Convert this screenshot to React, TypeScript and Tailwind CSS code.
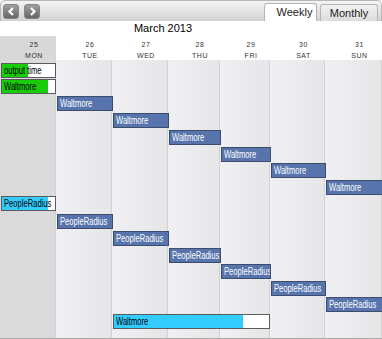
import React from "react";

const days = [
  { d: "25", n: "MON" },
  { d: "26", n: "TUE" },
  { d: "27", n: "WED" },
  { d: "28", n: "THU" },
  { d: "29", n: "FRI" },
  { d: "30", n: "SAT" },
  { d: "31", n: "SUN" },
];

const colStart = ["col-start-1", "col-start-2", "col-start-3", "col-start-4", "col-start-5", "col-start-6", "col-start-7"];
const rowStart = [
  "row-start-2", "row-start-3", "row-start-4", "row-start-5", "row-start-6", "row-start-7", "row-start-8", "row-start-9",
  "row-start-10", "row-start-11", "row-start-12", "row-start-13", "row-start-14", "row-start-15", "row-start-16", "row-start-17",
];

type Task = { row: number; col: number; span?: string; label: string; kind: "blue" | "green" | "cyan"; fill?: string };

const tasks: Task[] = [
  { row: 0, col: 0, label: "output time", kind: "green", fill: "w-[49%]" },
  { row: 1, col: 0, label: "Waltmore", kind: "green", fill: "w-[86%]" },
  { row: 2, col: 1, label: "Waltmore", kind: "blue" },
  { row: 3, col: 2, label: "Waltmore", kind: "blue" },
  { row: 4, col: 3, label: "Waltmore", kind: "blue" },
  { row: 5, col: 4, label: "Waltmore", kind: "blue" },
  { row: 6, col: 5, label: "Waltmore", kind: "blue" },
  { row: 7, col: 6, label: "Waltmore", kind: "blue" },
  { row: 8, col: 0, label: "PeopleRadius", kind: "cyan", fill: "w-[87%]" },
  { row: 9, col: 1, label: "PeopleRadius", kind: "blue" },
  { row: 10, col: 2, label: "PeopleRadius", kind: "blue" },
  { row: 11, col: 3, label: "PeopleRadius", kind: "blue" },
  { row: 12, col: 4, label: "PeopleRadius", kind: "blue" },
  { row: 13, col: 5, label: "PeopleRadius", kind: "blue" },
  { row: 14, col: 6, label: "PeopleRadius", kind: "blue" },
  { row: 15, col: 2, span: "col-span-3", label: "Waltmore", kind: "cyan", fill: "w-[83%]" },
];

// narrow label text, close to the Tahoma look of the original
const labelCls = "absolute left-[2px] top-0 text-[10px] leading-[13px] whitespace-nowrap scale-x-[0.76] origin-left";

function Bar({ t }: { t: Task }) {
  const place = `${colStart[t.col]} ${rowStart[t.row]} ${t.span ?? ""}`;
  if (t.kind === "blue") {
    return (
      <div className={`${place} ml-px mr-[-1px] h-[15px] bg-[#5774ad] border border-[#3c4c6c] relative overflow-hidden z-10`}>
        <span className={`${labelCls} text-white`}>{t.label}</span>
      </div>
    );
  }
  return (
    <div className={`${place} ml-px h-[15px] bg-white border border-[#5a5a5a] relative overflow-hidden z-10`}>
      <div className={`h-full ${t.fill} ${t.kind === "green" ? "bg-[#19cc0a]" : "bg-[#33ccff]"}`} />
      <span className={`${labelCls} text-black`}>{t.label}</span>
    </div>
  );
}

function Arrow({ dir }: { dir: "l" | "r" }) {
  return (
    <div className="w-[16px] h-[15px] rounded-[3px] bg-gradient-to-b from-[#a0a0a0] to-[#666666] border border-[#858585] flex items-center justify-center">
      <svg width="9" height="9" viewBox="0 0 9 9">
        <path d={dir === "l" ? "M6 1 L2.5 4.5 L6 8" : "M3 1 L6.5 4.5 L3 8"} stroke="white" strokeWidth="2.2" fill="none" />
      </svg>
    </div>
  );
}

export default function App() {
  return (
    <div className="w-[382px] h-[339px] flex flex-col bg-white overflow-hidden" style={{ fontFamily: '"Liberation Sans", Arial, sans-serif' }}>
      <div className="h-[21px] shrink-0 flex items-end justify-between rounded-t-[5px] border border-b-0 border-[#b8b8b8] bg-gradient-to-b from-[#f4f4f4] to-[#d2d2d2] pl-[2px] pr-[3px]">
        <div className="flex gap-[5px] self-center">
          <Arrow dir="l" />
          <Arrow dir="r" />
        </div>
        <div className="flex gap-[3px] items-end">
          <div className="w-[53px] h-[18px] bg-white border border-b-0 border-[#b4b4b4] rounded-t-[3px] text-[11px] text-[#222] flex items-center justify-center pl-[8px]">
            Weekly
          </div>
          <div className="w-[58px] h-[17px] bg-gradient-to-b from-[#f2f2f2] to-[#dcdcdc] border border-b-0 border-[#b4b4b4] rounded-t-[3px] text-[11px] text-[#222] flex items-center justify-center">
            Monthly
          </div>
        </div>
      </div>
      <div className="h-[15px] shrink-0 flex justify-center pr-[56px] text-[11px] leading-[15px] text-black">March 2013</div>
      <div className="h-[24px] shrink-0 grid grid-cols-[56px_56px_56px_52px_50px_55px_57px] border-b border-[#8593a8]">
        {days.map((d, i) => (
          <div key={d.n} className={`flex flex-col items-center pl-3 pt-[3px] text-[7px] leading-[11px] text-[#333] tracking-[0.5px] ${i === 0 ? "bg-[#d8d8d8]" : "bg-white"}`}>
            <span>{d.d}</span>
            <span>{d.n}</span>
          </div>
        ))}
      </div>
      <div className="flex-1 grid grid-cols-[56px_56px_56px_52px_50px_55px_57px] grid-rows-[3px_16px_17px_17px_17px_17px_16px_17px_16px_18px_17px_17px_16px_17px_16px_17px_17px_1fr] border-b border-[#a8a8a8]">
        {days.map((d, i) => (
          <div
            key={d.n}
            className={`${colStart[i]} row-span-full border-r ${i === 0 ? "bg-[#dadada] border-[#d0d0d0]" : "bg-gradient-to-r from-[#f0f0f4] to-[#e6e6e8] border-[#d2d2d2]"}`}
          />
        ))}
        {tasks.map((t, i) => (
          <Bar key={i} t={t} />
        ))}
      </div>
    </div>
  );
}
